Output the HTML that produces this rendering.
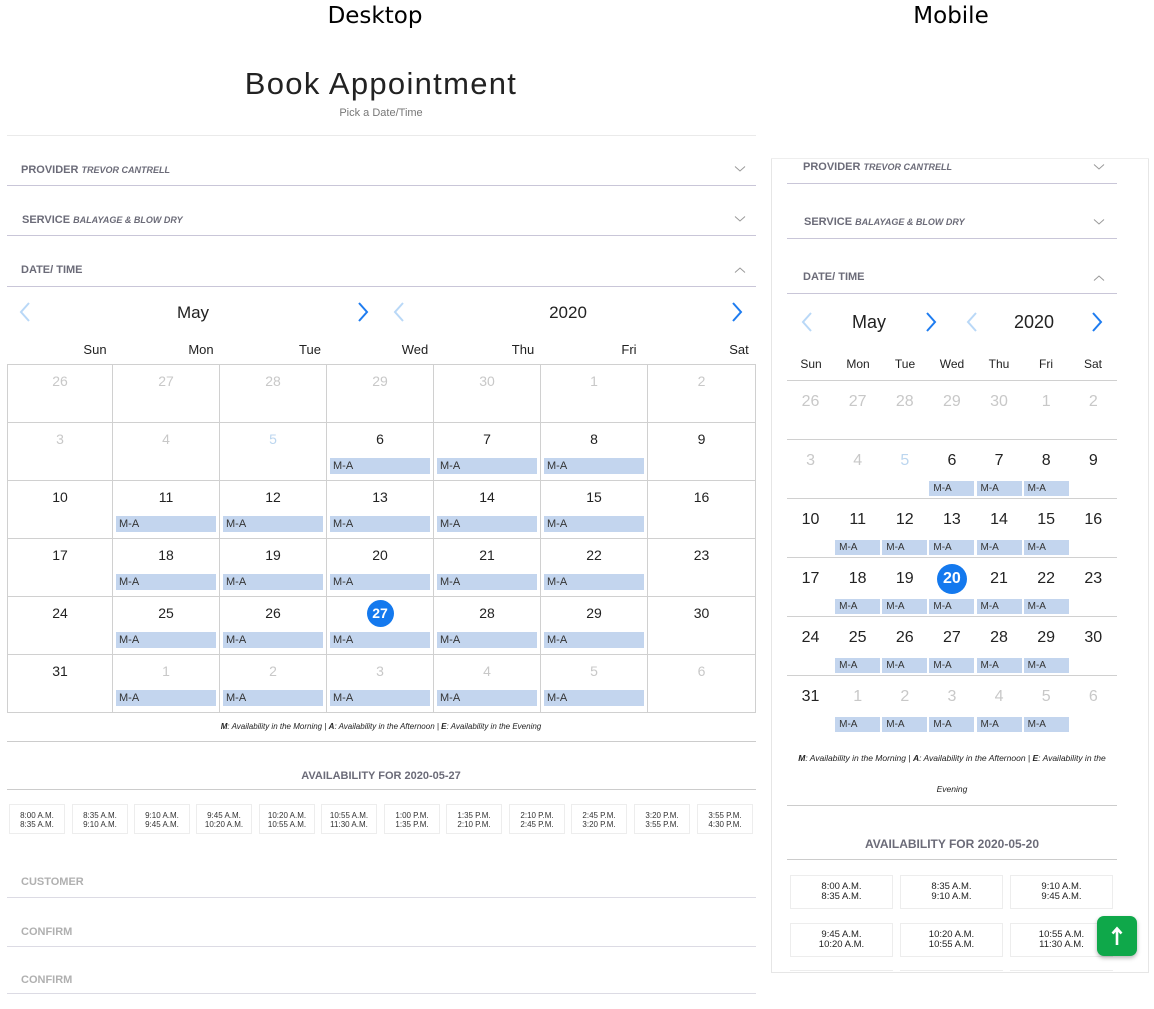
<!DOCTYPE html>
<html><head><meta charset="utf-8"><style>
*{box-sizing:border-box;margin:0;padding:0}
body{width:1154px;height:1009px;background:#fff;position:relative;overflow:hidden;font-family:"Liberation Sans",sans-serif;color:#222}
.a{position:absolute;white-space:nowrap}
.c{transform:translateX(-50%)}
.hl{position:absolute;height:1px;background:#c9c6d8}
.lbl{font-size:11px;font-weight:bold;color:#6b6b78}
.lbl i{font-size:9px;font-weight:bold;color:#6b6b78}
.gl{font-size:11px;font-weight:bold;color:#b0b0b0}
.dg{position:absolute;left:7px;top:364px;width:749px;display:flex;flex-wrap:wrap;border-top:1px solid #d0d0d0}
.dg div{width:107px;height:58px;border-right:1px solid #d0d0d0;border-bottom:1px solid #d0d0d0;position:relative;font-size:14px;text-align:center;padding-top:8px;line-height:16px}
.dg div:nth-child(7n+1){border-left:1px solid #d0d0d0;width:106px}
.dg div:nth-child(7n){width:108px}
.g{color:#c8c8c8}.lb{color:#bcd6ef}
.dg b{position:absolute;left:3px;right:3px;top:35px;height:16px;background:#c3d5ee;font-weight:normal;font-size:11px;text-align:left;padding-left:3px;line-height:17px;color:#333}
.dg s,.mg s{text-decoration:none;display:inline-block;width:27px;height:27px;border-radius:50%;background:#1479ee;color:#fff;line-height:27px;font-weight:bold;margin-top:-5px}
.mg{position:absolute;left:787px;top:380px;width:330px;display:flex;flex-wrap:wrap;border-top:1px solid #d0d0d0}
.mg div{width:47.14px;height:59px;border-bottom:1px solid #d0d0d0;position:relative;font-size:16px;text-align:center;padding-top:12px;line-height:18px}
.mg div:nth-child(n+36){border-bottom:none}
.mg s{width:30px;height:30px;line-height:30px;font-size:16px;margin-top:-6px}
.mg b{position:absolute;left:1px;width:45px;top:41px;height:15px;background:#c3d5ee;font-weight:normal;font-size:10px;text-align:left;padding-left:4px;line-height:15px;color:#333}
.sl{position:absolute;top:804px;width:56px;height:30px;border:1px solid #ededed;font-size:8px;text-align:center;padding-top:6px;line-height:9px;color:#333}
.ms{position:absolute;width:103px;height:34px;border:1px solid #ededed;font-size:9.5px;text-align:center;padding-top:6px;line-height:10px;color:#222}
</style></head><body>
<div class="a c" style="left:375px;top:3px;font-size:23px;color:#000;font-family:'DejaVu Sans',sans-serif">Desktop</div>
<div class="a c" style="left:951px;top:3px;font-size:23px;color:#000;font-family:'DejaVu Sans',sans-serif">Mobile</div>
<div class="a c" style="left:381px;top:66px;font-size:31px;font-weight:300;color:#222;letter-spacing:1.3px">Book Appointment</div>
<div class="a c" style="left:381px;top:107px;font-size:11px;color:#777">Pick a Date/Time</div>
<div class="hl" style="left:7px;top:135px;width:749px;background:#eaeaea"></div>

<div class="a lbl" style="left:21px;top:164px">PROVIDER <i>TREVOR CANTRELL</i></div>
<div class="hl" style="left:7px;top:185px;width:749px"></div>
<div class="a lbl" style="left:22px;top:214px">SERVICE <i>BALAYAGE &amp; BLOW DRY</i></div>
<div class="hl" style="left:7px;top:235px;width:749px"></div>
<div class="a lbl" style="left:21px;top:264px">DATE/ TIME</div>
<div class="hl" style="left:7px;top:286px;width:749px"></div>
<svg class="a" style="left:734px;top:165px" width="12" height="8"><path d="M1 1.5L6 6L11 1.5" fill="none" stroke="#999" stroke-width="1"/></svg>
<svg class="a" style="left:734px;top:215px" width="12" height="8"><path d="M1 1.5L6 6L11 1.5" fill="none" stroke="#999" stroke-width="1"/></svg>
<svg class="a" style="left:734px;top:266px" width="12" height="8"><path d="M1 6.5L6 2L11 6.5" fill="none" stroke="#999" stroke-width="1"/></svg>

<svg class="a" style="left:18px;top:301px" width="14" height="22"><path d="M11 2L3 11L11 20" fill="none" stroke="#b9d8f7" stroke-width="2"/></svg>
<div class="a c" style="left:193px;top:303px;font-size:17px">May</div>
<svg class="a" style="left:356px;top:301px" width="14" height="22"><path d="M3 2L11 11L3 20" fill="none" stroke="#1e7cf0" stroke-width="2"/></svg>
<svg class="a" style="left:392px;top:301px" width="14" height="22"><path d="M11 2L3 11L11 20" fill="none" stroke="#b9d8f7" stroke-width="2"/></svg>
<div class="a c" style="left:568px;top:303px;font-size:17px">2020</div>
<svg class="a" style="left:730px;top:301px" width="14" height="22"><path d="M3 2L11 11L3 20" fill="none" stroke="#1e7cf0" stroke-width="2"/></svg>

<div class="a c" style="left:95px;top:342px;font-size:13px">Sun</div>
<div class="a c" style="left:201px;top:342px;font-size:13px">Mon</div>
<div class="a c" style="left:310px;top:342px;font-size:13px">Tue</div>
<div class="a c" style="left:415px;top:342px;font-size:13px">Wed</div>
<div class="a c" style="left:523px;top:342px;font-size:13px">Thu</div>
<div class="a c" style="left:629px;top:342px;font-size:13px">Fri</div>
<div class="a c" style="left:739px;top:342px;font-size:13px">Sat</div>

<div class="dg">
<div class="g">26</div><div class="g">27</div><div class="g">28</div><div class="g">29</div><div class="g">30</div><div class="g">1</div><div class="g">2</div>
<div class="g">3</div><div class="g">4</div><div class="lb">5</div><div>6<b>M-A</b></div><div>7<b>M-A</b></div><div>8<b>M-A</b></div><div>9</div>
<div>10</div><div>11<b>M-A</b></div><div>12<b>M-A</b></div><div>13<b>M-A</b></div><div>14<b>M-A</b></div><div>15<b>M-A</b></div><div>16</div>
<div>17</div><div>18<b>M-A</b></div><div>19<b>M-A</b></div><div>20<b>M-A</b></div><div>21<b>M-A</b></div><div>22<b>M-A</b></div><div>23</div>
<div>24</div><div>25<b>M-A</b></div><div>26<b>M-A</b></div><div><s>27</s><b>M-A</b></div><div>28<b>M-A</b></div><div>29<b>M-A</b></div><div>30</div>
<div>31</div><div class="g">1<b>M-A</b></div><div class="g">2<b>M-A</b></div><div class="g">3<b>M-A</b></div><div class="g">4<b>M-A</b></div><div class="g">5<b>M-A</b></div><div class="g">6</div>
</div>

<div class="a c" style="left:381px;top:722px;font-size:8px;font-style:italic;color:#222"><b>M</b>: Availability in the Morning | <b>A</b>: Availability in the Afternoon | <b>E</b>: Availability in the Evening</div>
<div class="hl" style="left:7px;top:741px;width:749px;background:#ccc"></div>
<div class="a c lbl" style="left:381px;top:770px;font-size:11px">AVAILABILITY FOR 2020-05-27</div>
<div class="hl" style="left:7px;top:789px;width:749px;background:#ccc"></div>

<div class="sl" style="left:9px">8:00 A.M.<br>8:35 A.M.</div>
<div class="sl" style="left:72px">8:35 A.M.<br>9:10 A.M.</div>
<div class="sl" style="left:134px">9:10 A.M.<br>9:45 A.M.</div>
<div class="sl" style="left:196px">9:45 A.M.<br>10:20 A.M.</div>
<div class="sl" style="left:259px">10:20 A.M.<br>10:55 A.M.</div>
<div class="sl" style="left:321px">10:55 A.M.<br>11:30 A.M.</div>
<div class="sl" style="left:384px">1:00 P.M.<br>1:35 P.M.</div>
<div class="sl" style="left:446px">1:35 P.M.<br>2:10 P.M.</div>
<div class="sl" style="left:509px">2:10 P.M.<br>2:45 P.M.</div>
<div class="sl" style="left:571px">2:45 P.M.<br>3:20 P.M.</div>
<div class="sl" style="left:634px">3:20 P.M.<br>3:55 P.M.</div>
<div class="sl" style="left:697px">3:55 P.M.<br>4:30 P.M.</div>

<div class="a gl" style="left:21px;top:876px">CUSTOMER</div>
<div class="hl" style="left:7px;top:897px;width:749px;background:#dcdbe4"></div>
<div class="a gl" style="left:21px;top:926px">CONFIRM</div>
<div class="hl" style="left:7px;top:946px;width:749px;background:#dcdbe4"></div>
<div class="a gl" style="left:21px;top:974px">CONFIRM</div>
<div class="hl" style="left:7px;top:993px;width:749px;background:#dcdbe4"></div>

<!-- Mobile -->
<div class="a" style="left:771px;top:158px;width:378px;height:815px;border:1px solid #e6e6e6;border-top:none"></div>
<div class="a" style="left:771px;top:158px;width:378px;height:1px;background:#eee"></div>
<div class="a lbl" style="left:803px;top:161px">PROVIDER <i>TREVOR CANTRELL</i></div>
<div class="hl" style="left:787px;top:183px;width:330px"></div>
<div class="a lbl" style="left:804px;top:216px">SERVICE <i>BALAYAGE &amp; BLOW DRY</i></div>
<div class="hl" style="left:787px;top:238px;width:330px"></div>
<div class="a lbl" style="left:803px;top:271px">DATE/ TIME</div>
<div class="hl" style="left:787px;top:293px;width:330px"></div>
<svg class="a" style="left:1093px;top:163px" width="12" height="8"><path d="M1 1.5L6 6L11 1.5" fill="none" stroke="#999" stroke-width="1"/></svg>
<svg class="a" style="left:1093px;top:218px" width="12" height="8"><path d="M1 1.5L6 6L11 1.5" fill="none" stroke="#999" stroke-width="1"/></svg>
<svg class="a" style="left:1093px;top:274px" width="12" height="8"><path d="M1 6.5L6 2L11 6.5" fill="none" stroke="#999" stroke-width="1"/></svg>

<svg class="a" style="left:800px;top:311px" width="14" height="22"><path d="M11 2L3 11L11 20" fill="none" stroke="#b9d8f7" stroke-width="2"/></svg>
<div class="a c" style="left:869px;top:312px;font-size:18px">May</div>
<svg class="a" style="left:924px;top:311px" width="14" height="22"><path d="M3 2L11 11L3 20" fill="none" stroke="#1e7cf0" stroke-width="2"/></svg>
<svg class="a" style="left:965px;top:311px" width="14" height="22"><path d="M11 2L3 11L11 20" fill="none" stroke="#b9d8f7" stroke-width="2"/></svg>
<div class="a c" style="left:1034px;top:312px;font-size:18px">2020</div>
<svg class="a" style="left:1090px;top:311px" width="14" height="22"><path d="M3 2L11 11L3 20" fill="none" stroke="#1e7cf0" stroke-width="2"/></svg>

<div class="a c" style="left:811px;top:357px;font-size:12px">Sun</div>
<div class="a c" style="left:858px;top:357px;font-size:12px">Mon</div>
<div class="a c" style="left:905px;top:357px;font-size:12px">Tue</div>
<div class="a c" style="left:952px;top:357px;font-size:12px">Wed</div>
<div class="a c" style="left:999px;top:357px;font-size:12px">Thu</div>
<div class="a c" style="left:1046px;top:357px;font-size:12px">Fri</div>
<div class="a c" style="left:1093px;top:357px;font-size:12px">Sat</div>

<div class="mg">
<div class="g">26</div><div class="g">27</div><div class="g">28</div><div class="g">29</div><div class="g">30</div><div class="g">1</div><div class="g">2</div>
<div class="g">3</div><div class="g">4</div><div class="lb">5</div><div>6<b>M-A</b></div><div>7<b>M-A</b></div><div>8<b>M-A</b></div><div>9</div>
<div>10</div><div>11<b>M-A</b></div><div>12<b>M-A</b></div><div>13<b>M-A</b></div><div>14<b>M-A</b></div><div>15<b>M-A</b></div><div>16</div>
<div>17</div><div>18<b>M-A</b></div><div>19<b>M-A</b></div><div><s>20</s><b>M-A</b></div><div>21<b>M-A</b></div><div>22<b>M-A</b></div><div>23</div>
<div>24</div><div>25<b>M-A</b></div><div>26<b>M-A</b></div><div>27<b>M-A</b></div><div>28<b>M-A</b></div><div>29<b>M-A</b></div><div>30</div>
<div>31</div><div class="g">1<b>M-A</b></div><div class="g">2<b>M-A</b></div><div class="g">3<b>M-A</b></div><div class="g">4<b>M-A</b></div><div class="g">5<b>M-A</b></div><div class="g">6</div>
</div>

<div class="a c" style="left:952px;top:753px;font-size:8.5px;font-style:italic;color:#222"><b>M</b>: Availability in the Morning | <b>A</b>: Availability in the Afternoon | <b>E</b>: Availability in the</div>
<div class="a c" style="left:952px;top:784px;font-size:8.5px;font-style:italic;color:#222">Evening</div>
<div class="hl" style="left:787px;top:805px;width:330px;background:#ccc"></div>
<div class="a c lbl" style="left:952px;top:837px;font-size:12px">AVAILABILITY FOR 2020-05-20</div>
<div class="hl" style="left:787px;top:859px;width:330px;background:#ccc"></div>

<div class="ms" style="left:790px;top:875px">8:00 A.M.<br>8:35 A.M.</div>
<div class="ms" style="left:900px;top:875px">8:35 A.M.<br>9:10 A.M.</div>
<div class="ms" style="left:1010px;top:875px">9:10 A.M.<br>9:45 A.M.</div>
<div class="ms" style="left:790px;top:923px">9:45 A.M.<br>10:20 A.M.</div>
<div class="ms" style="left:900px;top:923px">10:20 A.M.<br>10:55 A.M.</div>
<div class="ms" style="left:1010px;top:923px">10:55 A.M.<br>11:30 A.M.</div>
<div class="a" style="left:790px;top:970px;width:103px;height:1px;background:#ededed"></div>
<div class="a" style="left:900px;top:970px;width:103px;height:1px;background:#ededed"></div>
<div class="a" style="left:1010px;top:970px;width:103px;height:1px;background:#ededed"></div>

<div class="a" style="left:1097px;top:916px;width:40px;height:40px;background:#0fa84a;border-radius:7px;box-shadow:0 2px 4px rgba(0,0,0,.3)">
<svg width="40" height="40"><path d="M20 29V13M15.5 17.5L20 12.5L24.5 17.5" fill="none" stroke="#fff" stroke-width="2.6"/></svg>
</div>
</body></html>
